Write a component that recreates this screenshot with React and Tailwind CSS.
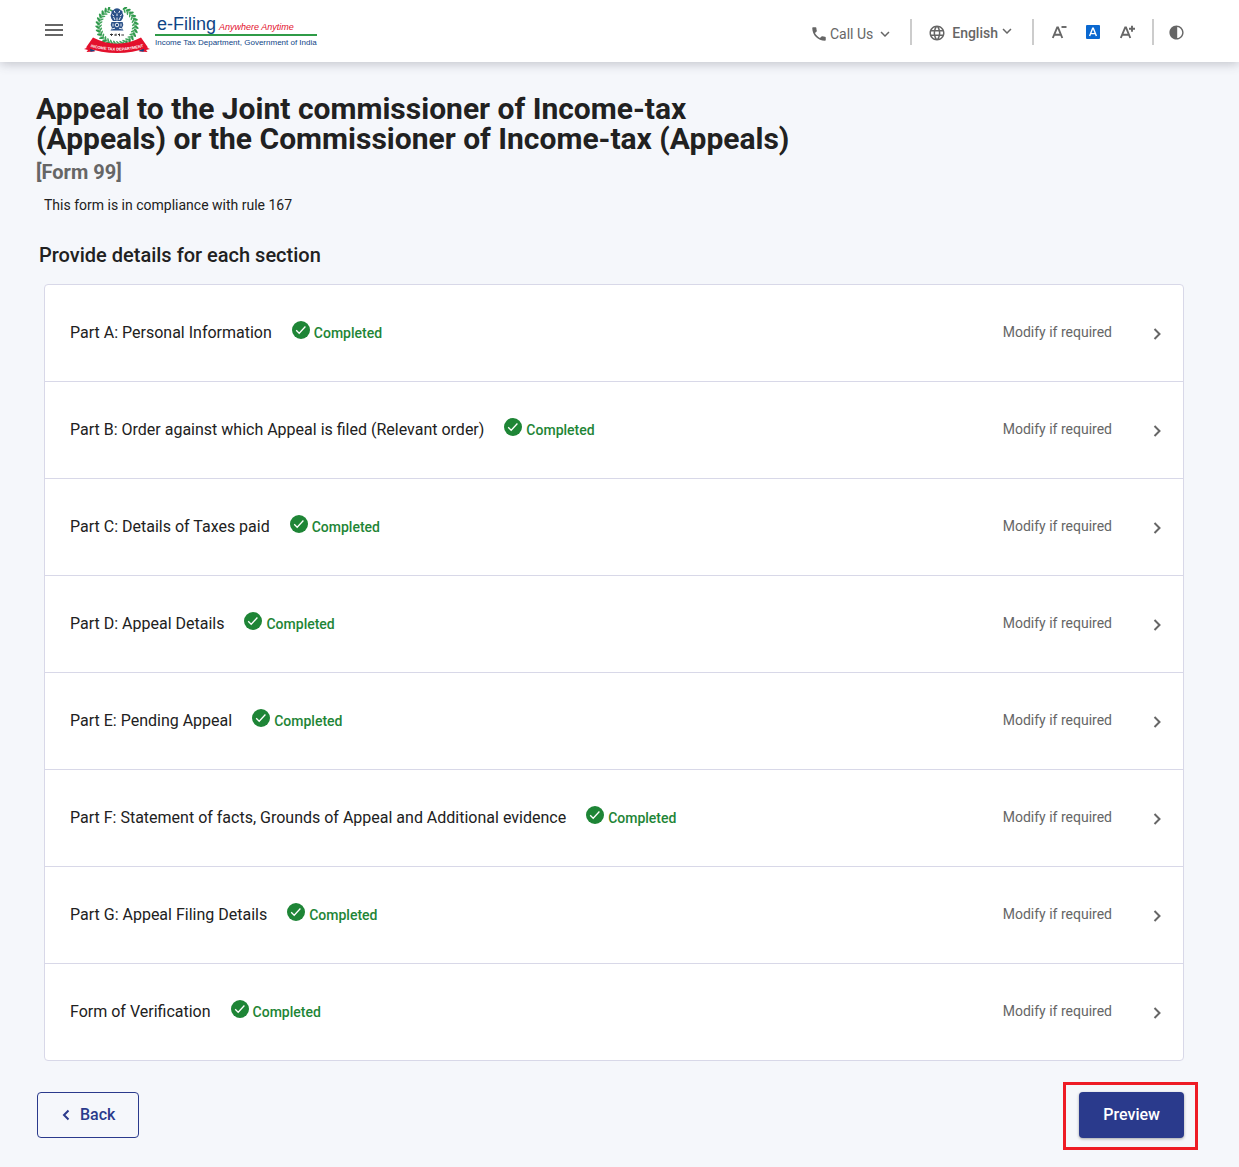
import React from "react";
import { MdMenu, MdPhone, MdKeyboardArrowDown, MdLanguage, MdContrast } from "react-icons/md";

const sections = [
  "Part A: Personal Information",
  "Part B: Order against which Appeal is filed (Relevant order)",
  "Part C: Details of Taxes paid",
  "Part D: Appeal Details",
  "Part E: Pending Appeal",
  "Part F: Statement of facts, Grounds of Appeal and Additional evidence",
  "Part G: Appeal Filing Details",
  "Form of Verification",
];

const leaves = Array.from({ length: 28 }, (_, i) => -66 + (i * 312) / 27);

function Emblem() {
  return (
    <svg viewBox="0 0 66 46" className="h-[46px] w-[66px] shrink-0" aria-hidden="true">
      <path d="M24 2.5A18.500 18.500 0 1 0 42 2.500" fill="none" stroke="#a9d3b4" strokeWidth="3" />
      {leaves.map((a) => (
        <g key={a} transform={`rotate(${a} 33 19)`}>
          <ellipse cx="52.500" cy="19" rx="2.600" ry="1.100" fill="#2f9a4c" transform="rotate(35 52.500 19)" />
          <ellipse cx="49.500" cy="20" rx="2" ry="0.800" fill="#3fa35a" transform="rotate(-40 49.500 20)" />
        </g>
      ))}
      <g fill="#2a5088">
        <path d="M27.500 6q-.5-2.500 2-3 1-1.800 3.500-1.800t3.500 1.800q2.500.5 2 3l1 2.500-.8 3-1.700 2.500h-8L27.300 11.500 26.500 8.500z" />
        <path d="M27.500 14.800h11l.8 3.200-1.300 3 1.500 2.500h-13l1.500-2.500-1.300-3z" />
      </g>
      <g fill="none" stroke="#fff" strokeWidth="0.9">
        <path d="M30.200 3.800l1 2.200M35.800 3.800l-1 2.200M28 7.500l2 1.500M38 7.500l-2 1.500M29.500 10l1.500 3M36.500 10l-1.500 3M33 6.500v2.500M33 10.500v3M27 14.500h12M27.500 22l3.500-.8M38.500 22l-3.500-.8M29 16.500v3M37 16.500v3" />
        <circle cx="33" cy="18" r="1.800" />
      </g>
      <path d="M26 27.500h3M27.500 26.600v2.400M30.200 28h2.200M32 26.600v2.200M34 27.500h2M35.500 26.600v2.600M37.300 28H40" stroke="#333" strokeWidth="1" fill="none" />
      <path d="M0 42l6-2.500 5 5-8.500.5 1.500-2zM66 42l-6-2.500-5 5 8.500.5-1.500-2z" fill="#e3102c" />
      <path d="M6 41.500l5.500 2.200-5 1zM60 41.500l-5.500 2.200 5 1z" fill="#0f4586" />
      <path d="M9 30.500Q33 43 57 30.500L64 40.500Q33 51.500 2 40.500Z" fill="#e3102c" />
      <defs>
        <path id="ribbon" d="M5 39.500Q33 47.500 61 39.500" />
      </defs>
      <text fontSize="4" fontWeight="700" fill="#fff" fontFamily="Liberation Sans, sans-serif">
        <textPath href="#ribbon" startOffset="50%" textAnchor="middle">INCOME TAX DEPARTMENT</textPath>
      </text>
    </svg>
  );
}

function Logo() {
  return (
    <a href="#" className="ml-[18px] flex items-start gap-[5px]" aria-label="e-Filing home">
      <Emblem />
      <span className="mt-1 flex flex-col whitespace-nowrap font-['Liberation_Sans',sans-serif]">
        <span className="flex h-[25px] items-baseline gap-[3px] border-b-2 border-[#2f9b47] px-0.5">
          <span className="text-[18px] leading-[26px] text-[#0f4586]">e-Filing</span>
          <span className="text-[9px] text-[#e3102c] italic">Anywhere Anytime</span>
        </span>
        <span className="text-[8px] leading-[14px] text-[#0f4586]">Income Tax Department, Government of India</span>
      </span>
    </a>
  );
}

function Divider() {
  return <span className="h-[26px] w-0.5 bg-[#cccccc]" />;
}

function FontSizeIcon({ sign }) {
  return (
    <svg viewBox="0 0 16 14" className="h-[14px] w-4" fill="none" stroke="#666" strokeWidth="1.900" aria-hidden="true">
      <path d="M.8 13L5.200 2.500h.8L10.300 13M2.500 9.700h6.200" />
      <path d={sign === "+" ? "M9 3.700h6M12 .7v6" : "M9.500 2h5"} />
    </svg>
  );
}

function Header() {
  return (
    <header className="relative flex h-[62px] items-start bg-white pr-[54px] pl-[42px] text-[#666] shadow-[0_2px_10px_rgba(60,60,80,0.28)]">
      <button type="button" aria-label="Menu" className="mt-[18px]">
        <MdMenu size={24} />
      </button>
      <div className="mt-[7px]">
        <Logo />
      </div>
      <div className="mt-[19px] ml-auto flex h-[26px] items-center text-sm">
        <button type="button" className="mt-1 flex items-center">
          <MdPhone size={18} />
          <span className="ml-0.5">Call Us</span>
          <MdKeyboardArrowDown size={18} className="ml-[3px]" />
        </button>
        <span className="ml-4 flex">
          <Divider />
        </span>
        <button type="button" className="mt-0.5 ml-4 flex items-center font-medium">
          <MdLanguage size={18} />
          <span className="ml-1.5">English</span>
          <MdKeyboardArrowDown size={18} className="mb-1" />
        </button>
        <span className="ml-4 flex">
          <Divider />
        </span>
        <button type="button" aria-label="Decrease text size" className="ml-[18px]">
          <FontSizeIcon sign="-" />
        </button>
        <button type="button" aria-label="Default text size" className="ml-[18px] flex size-[14px] items-center justify-center rounded-[1px] bg-[#0a68d0]">
          <svg viewBox="0 0 14 14" className="size-[14px]" fill="none" stroke="#fff" strokeWidth="1.400" aria-hidden="true">
            <path d="M3.600 11L6.700 3.200h.6L10.400 11M4.700 8.600h4.600" />
          </svg>
        </button>
        <button type="button" aria-label="Increase text size" className="ml-5">
          <FontSizeIcon sign="+" />
        </button>
        <span className="ml-4 flex">
          <Divider />
        </span>
        <button type="button" aria-label="Toggle contrast" className="ml-[14px]">
          <MdContrast size={17} />
        </button>
      </div>
    </header>
  );
}

function Chevron({ left }) {
  return (
    <svg viewBox="0 0 20 20" className="size-5" fill="none" stroke="currentColor" strokeWidth="2" aria-hidden="true">
      <path d={left ? "M12.500 5.500L8 10l4.500 4.500" : "M7.500 5l5 5-5 5"} />
    </svg>
  );
}

function SectionRow({ title }) {
  return (
    <li className="border-b border-[#d8d8e8] last:border-b-0">
      <a href="#" className="flex h-24 items-center pr-4 pl-[25px]">
        <span className="text-base text-[#212121]">{title}</span>
        <span className="ml-5 flex items-center gap-1 text-sm font-medium text-[#1e8536]">
          <svg viewBox="0 0 18 18" className="mb-1.5 size-[18px]" aria-hidden="true">
            <circle cx="9" cy="9" r="9" fill="#1e8536" />
            <path d="M4.200 9.200l3 3 6.200-6.700" fill="none" stroke="#fff" strokeWidth="1.300" />
          </svg>
          Completed
        </span>
        <span className="mb-0.5 ml-auto text-sm text-[#666]">Modify if required</span>
        <span className="mt-0.5 ml-[35px] text-[#666]">
          <Chevron />
        </span>
      </a>
    </li>
  );
}

export default function App() {
  return (
    <div className="min-h-screen bg-[#f5f7fb] font-['Roboto',sans-serif] text-[#212121]">
      <Header />
      <main className="pt-8 pr-[55px] pb-[29px] pl-9">
        <h1 className="max-w-[780px] text-[30px] leading-[30px] font-bold">
          Appeal to the Joint commissioner of Income-tax
          <br />
          (Appeals) or the Commissioner of Income-tax (Appeals)
        </h1>
        <p className="mt-1.5 text-xl leading-6 font-bold text-[#666]">[Form 99]</p>
        <p className="mt-[11px] ml-2 text-sm leading-5">This form is in compliance with rule 167</p>
        <h2 className="mt-7 ml-[3px] text-xl leading-6 font-medium">Provide details for each section</h2>
        <ul className="mt-[17px] ml-2 rounded border border-[#d8d8e8] bg-white">
          {sections.map((title) => (
            <SectionRow key={title} title={title} />
          ))}
        </ul>
        <div className="mt-[31px] ml-px flex items-center justify-between">
          <button type="button" className="flex h-[46px] items-center rounded border border-[#2a3a8c] pr-[23px] pl-[18px] font-medium text-[#2a3a8c]">
            <Chevron left />
            <span className="ml-1">Back</span>
          </button>
          <div className="relative">
            <button type="button" className="h-[46px] rounded bg-[#2a3a8c] px-6 font-medium text-white shadow-[0_1px_3px_rgba(0,0,0,0.35)]">
              Preview
            </button>
            <span className="pointer-events-none absolute -top-2.5 -right-3.5 -bottom-3 -left-4 border-3 border-[#ee1c25]" />
          </div>
        </div>
      </main>
    </div>
  );
}
